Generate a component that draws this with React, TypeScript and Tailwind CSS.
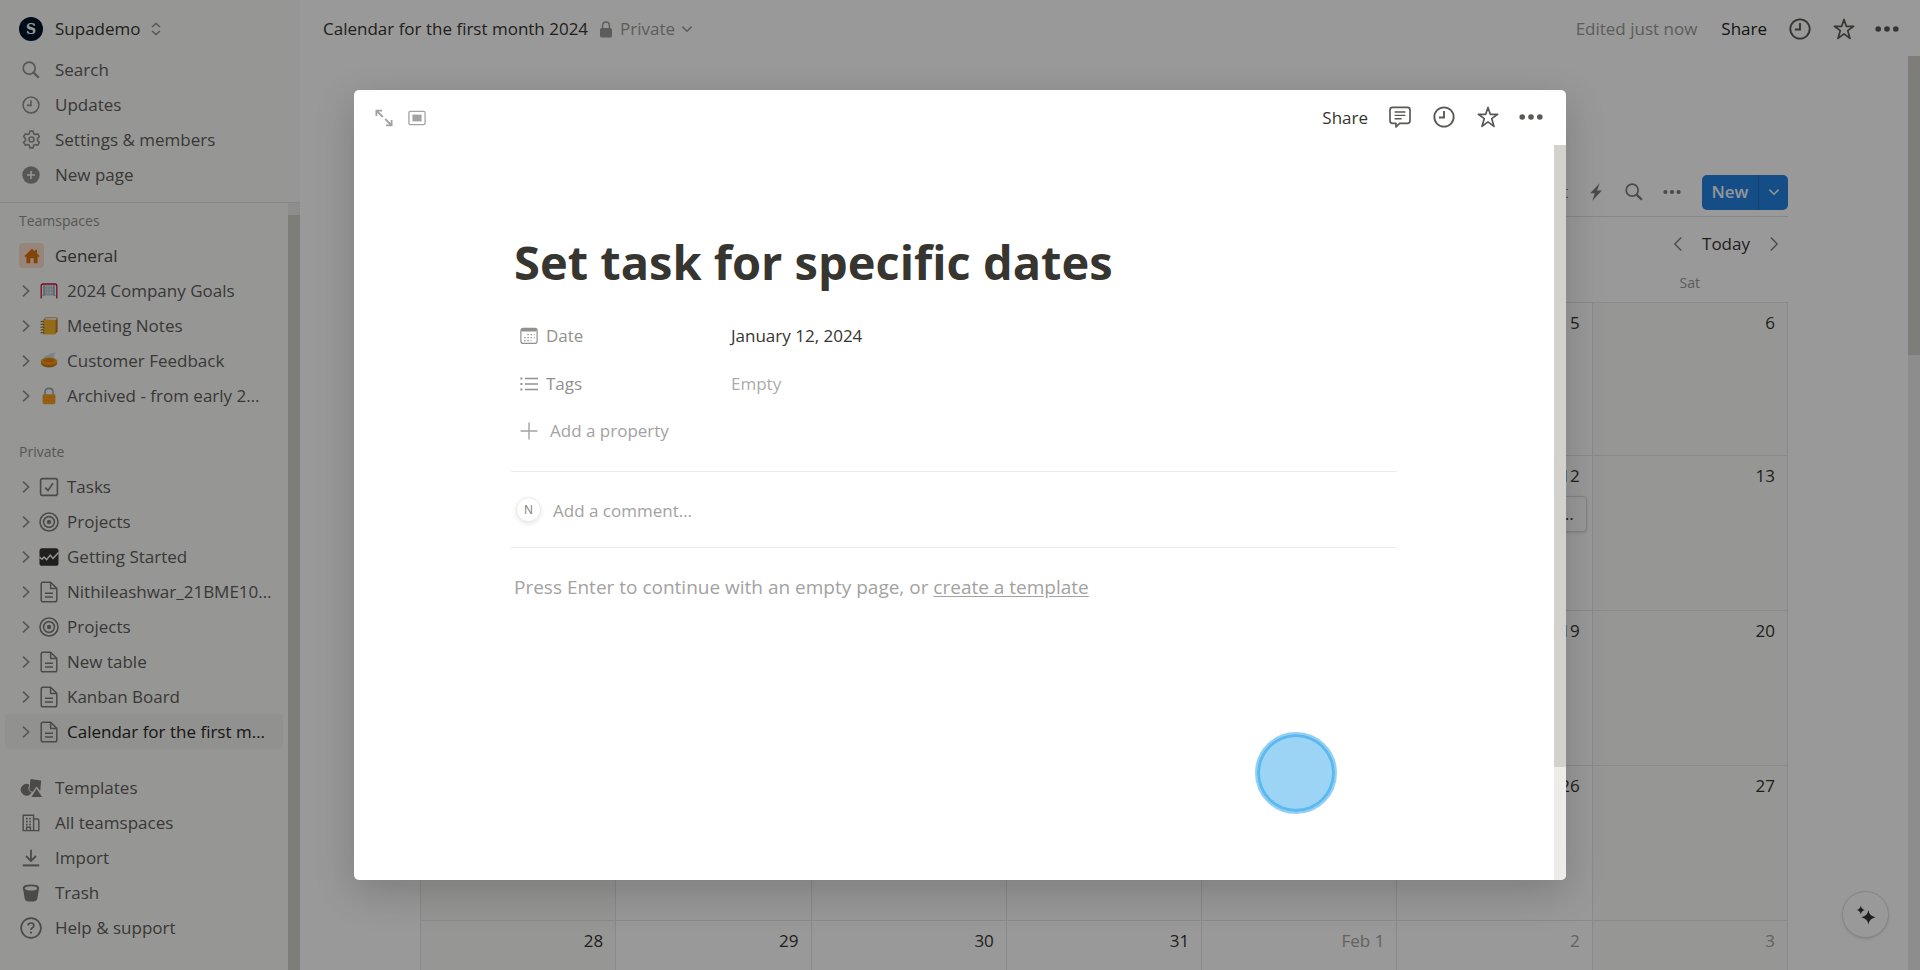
import type { ReactNode } from "react";

type IconProps = { className?: string };

function ChevronRight({ className = "" }: IconProps) {
  return (
    <svg viewBox="0 0 16 16" className={className} fill="none" stroke="currentColor" strokeWidth="1.9" aria-hidden="true">
      <path d="M4.6 1.8 L11 8 L4.6 14.2" />
    </svg>
  );
}

function ThinChevron({ className = "" }: IconProps) {
  return (
    <svg viewBox="0 0 16 16" className={className} fill="none" stroke="currentColor" strokeWidth="1.4" aria-hidden="true">
      <path d="M4.8 1.4 L11.2 8 L4.8 14.6" />
    </svg>
  );
}

function ChevronDown({ className = "" }: IconProps) {
  return (
    <svg viewBox="0 0 12 12" className={className} fill="none" stroke="currentColor" strokeWidth="1.5" aria-hidden="true">
      <path d="M1.4 3.6 L6 8.2 L10.6 3.6" />
    </svg>
  );
}

function UpDown({ className = "" }: IconProps) {
  return (
    <svg viewBox="0 0 10 14" className={className} fill="none" stroke="currentColor" strokeWidth="1.5" aria-hidden="true">
      <path d="M1 5 L5 1.4 L9 5 M1 9 L5 12.6 L9 9" />
    </svg>
  );
}

function SearchIcon({ className = "" }: IconProps) {
  return (
    <svg viewBox="0 0 18 18" className={className} fill="none" stroke="currentColor" aria-hidden="true">
      <circle cx="7.2" cy="7.2" r="6" strokeWidth="1.7" />
      <path d="M11.6 11.6 L16.8 16.8" strokeWidth="2.3" />
    </svg>
  );
}

function ClockIcon({ className = "" }: IconProps) {
  return (
    <svg viewBox="0 0 20 20" className={className} fill="none" stroke="currentColor" strokeWidth="1.7" aria-hidden="true">
      <circle cx="10" cy="10" r="8.8" />
      <path d="M10 4.6 V10.4 H5.4" />
    </svg>
  );
}

function GearIcon({ className = "" }: IconProps) {
  return (
    <svg viewBox="0 0 20 20" className={className} fill="none" stroke="currentColor" strokeWidth="1.7" strokeLinejoin="round" aria-hidden="true">
      <path d="M8.3 1.2 H11.7 L12.3 3.9 L13.9 4.8 L16.5 4 L18.3 6.9 L16.3 8.9 V11.1 L18.3 13.1 L16.5 16 L13.9 15.2 L12.3 16.1 L11.7 18.8 H8.3 L7.7 16.1 L6.1 15.2 L3.5 16 L1.7 13.1 L3.7 11.1 V8.9 L1.7 6.9 L3.5 4 L6.1 4.8 L7.7 3.9 Z" />
      <circle cx="10" cy="10" r="2.6" />
    </svg>
  );
}

function PlusCircle({ className = "" }: IconProps) {
  return (
    <svg viewBox="0 0 18 18" className={className} aria-hidden="true">
      <circle cx="9" cy="9" r="8.7" fill="currentColor" />
      <path d="M9 5 V13 M5 9 H13" stroke="#f9f9f7" strokeWidth="1.6" />
    </svg>
  );
}

function HouseIcon({ className = "" }: IconProps) {
  return (
    <svg viewBox="0 0 16 16" className={className} fill="currentColor" aria-hidden="true">
      <path d="M8 .8 L10.9 3.5 V1.8 H13 V5.5 L15.6 8 L14.8 9 L13.6 8.4 V15.2 H9.7 V10.3 H6.3 V15.2 H2.4 V8.4 L1.2 9 L.4 8 Z" />
    </svg>
  );
}

function GoalIcon({ className = "" }: IconProps) {
  return (
    <svg viewBox="0 0 18 18" className={className} fill="none" aria-hidden="true">
      <path d="M4 3 H14 V14 H4 Z" fill="#dbe5ec" />
      <path d="M2 14 L4 12.5 V3 M16 14 L14 12.5 V3 M4 12.5 H14 M6.5 3 V12.5 M9 3 V12.5 M11.5 3 V12.5 M4 6 H14 M4 9 H14" stroke="#9fb2bf" strokeWidth=".6" />
      <path d="M4 3 V14 M14 3 V14" stroke="#758a98" strokeWidth=".9" />
      <path d="M1.2 16.5 V4 Q1.2 2 3 2 H15 Q16.8 2 16.8 4 V16.5" stroke="#c8103c" strokeWidth="1.3" />
    </svg>
  );
}

function NotebookIcon({ className = "" }: IconProps) {
  return (
    <svg viewBox="0 0 18 18" className={className} fill="none" aria-hidden="true">
      <path d="M3.4 2.6 L5.6 .5 H16.4 Q17.6 .5 17.6 1.8 V14.4 L15.4 17 Z" fill="#b97a2a" />
      <path d="M4.2 2.6 L6 1.1 H16.2 L17 2 L15.4 3.6 Z" fill="#f5e6cf" />
      <rect x="2.8" y="3" width="12.8" height="14.4" rx="1.2" fill="#f5b52c" />
      <path d="M.6 4.8 Q2.4 3.6 4.2 5 M.6 7.6 Q2.4 6.4 4.2 7.8 M.6 10.4 Q2.4 9.2 4.2 10.6 M.6 13.2 Q2.4 12 4.2 13.4 M.6 16 Q2.4 14.8 4.2 16.2" stroke="#59482c" strokeWidth="1" />
    </svg>
  );
}

function PieIcon({ className = "" }: IconProps) {
  return (
    <svg viewBox="0 0 18 18" className={className} fill="none" aria-hidden="true">
      <path d="M4 6 Q5 3 8.5 3 Q9.5 1 16 .8 Q13 3 14.5 6 Z" fill="#cfdde8" />
      <path d="M1 9.5 V12 Q3 15.4 9 15.4 Q15 15.4 17 12 V9.5 Z" fill="#c77a12" />
      <ellipse cx="9" cy="9.2" rx="8.2" ry="3.8" fill="#f79a1d" />
      <ellipse cx="9" cy="8.3" rx="5.6" ry="2" fill="#e08410" />
    </svg>
  );
}

function LockEmoji({ className = "" }: IconProps) {
  return (
    <svg viewBox="0 0 18 18" className={className} fill="none" aria-hidden="true">
      <path d="M5 8 V5 Q5 1.4 9 1.4 Q13 1.4 13 5 V8" stroke="#8fa7b8" strokeWidth="1.6" />
      <rect x="2.6" y="7.2" width="12.8" height="10" rx="1.4" fill="#f7a223" />
      <path d="M3 10.4 H15 M3 13.6 H15" stroke="#ea9416" strokeWidth=".8" />
    </svg>
  );
}

function TaskIcon({ className = "" }: IconProps) {
  return (
    <svg viewBox="0 0 20 20" className={className} fill="none" stroke="currentColor" strokeWidth="1.6" aria-hidden="true">
      <rect x="1.6" y="1.6" width="16.8" height="16.8" rx="2" />
      <path d="M6.2 10.6 L9 13.4 L14 6.2" />
    </svg>
  );
}

function TargetIcon({ className = "" }: IconProps) {
  return (
    <svg viewBox="0 0 20 20" className={className} fill="none" stroke="currentColor" strokeWidth="1.6" aria-hidden="true">
      <circle cx="10" cy="10" r="9" />
      <circle cx="10" cy="10" r="5.4" />
      <circle cx="10" cy="10" r="2.2" fill="currentColor" stroke="none" />
    </svg>
  );
}

function ActivityIcon({ className = "" }: IconProps) {
  return (
    <svg viewBox="0 0 20 20" className={className} fill="none" aria-hidden="true">
      <rect x=".5" y="1.2" width="19" height="17.6" rx="2.6" fill="#37352f" />
      <path d="M.5 10 L3 12.2 L5 10 L7.6 12.6 L11.2 8 L14 11.4 L19.5 5.4" stroke="#f9f9f7" strokeWidth="1.4" />
    </svg>
  );
}

function PageIcon({ className = "" }: IconProps) {
  return (
    <svg viewBox="0 0 18 22" className={className} fill="none" stroke="currentColor" strokeWidth="1.5" strokeLinejoin="round" aria-hidden="true">
      <path d="M3 1.2 H10.6 L16.8 7.4 V19 Q16.8 20.8 15 20.8 H3 Q1.2 20.8 1.2 19 V3 Q1.2 1.2 3 1.2 Z" />
      <path d="M10.6 1.4 V7.4 H16.6 M5 12.2 H13 M5 16 H13" />
    </svg>
  );
}

function TemplatesIcon({ className = "" }: IconProps) {
  return (
    <svg viewBox="0 0 22 20" className={className} fill="currentColor" aria-hidden="true">
      <path d="M10.5 1 L21.2 2.6 L20.2 13 L16.6 8.6 L12.8 13.8 Q11 13.4 9.4 12 Z" />
      <path d="M9.2 6.6 A5.8 5.8 0 1 0 10.6 16 L11.6 14.4 Q8 13 8.4 10.6 Z" />
      <path d="M16.6 10.4 L22 19 H11.4 Z" />
    </svg>
  );
}

function BuildingIcon({ className = "" }: IconProps) {
  return (
    <svg viewBox="0 0 18 18" className={className} fill="none" stroke="currentColor" strokeWidth="1.4" aria-hidden="true">
      <path d="M1.2 1.2 H11.6 V16.6 H1.2 Z M11.6 5 H15.6 Q16.8 5 16.8 6.2 V16.6 H11.6" />
      <path d="M4 4.6 H9 M4 7.6 H9 M4 10.6 H9 " strokeWidth="1.6" strokeDasharray="1.6 1.6" />
      <path d="M4.6 16.4 V13.2 H8.4 V16.4" />
    </svg>
  );
}

function ImportIcon({ className = "" }: IconProps) {
  return (
    <svg viewBox="0 0 18 18" className={className} fill="none" stroke="currentColor" strokeWidth="1.8" aria-hidden="true">
      <path d="M9 .8 V11.4 M4 7 L9 12 L14 7" />
      <path d="M.8 16.4 H17.2" strokeWidth="2" />
    </svg>
  );
}

function TrashIcon({ className = "" }: IconProps) {
  return (
    <svg viewBox="0 0 18 18" className={className} aria-hidden="true">
      <path d="M.8 3.8 Q.8 .4 9 .4 Q17.2 .4 17.2 3.8 L15.2 15 Q14.6 17.6 9 17.6 Q3.4 17.6 2.8 15 Z" fill="currentColor" />
      <ellipse cx="9" cy="4.4" rx="6.2" ry="2.2" fill="#f9f9f7" />
    </svg>
  );
}

function HelpIcon({ className = "" }: IconProps) {
  return (
    <svg viewBox="0 0 22 22" className={className} fill="none" stroke="currentColor" strokeWidth="1.7" aria-hidden="true">
      <circle cx="11" cy="11" r="9.9" />
      <path d="M8.1 8.6 Q8.1 6 11 6 Q13.9 6 13.9 8.5 Q13.9 9.9 12.4 10.8 Q11 11.7 11 13" />
      <circle cx="11" cy="15.6" r="1.1" fill="currentColor" stroke="none" />
    </svg>
  );
}

function PadlockIcon({ className = "" }: IconProps) {
  return (
    <svg viewBox="0 0 12 17" className={className} aria-hidden="true">
      <path d="M2.6 8 V4.6 Q2.6 1 6 1 Q9.4 1 9.4 4.6 V8" fill="none" stroke="currentColor" strokeWidth="1.4" />
      <rect x="0" y="7" width="12" height="9.6" rx="1.6" fill="currentColor" />
    </svg>
  );
}

function StarIcon({ className = "" }: IconProps) {
  return (
    <svg viewBox="0 0 22 22" className={className} fill="none" stroke="currentColor" strokeWidth="1.7" strokeLinejoin="round" aria-hidden="true">
      <path d="M11 1.4 L13.3 8.3 H20.6 L14.7 12.6 L17 20.4 L11 15.8 L5 20.4 L7.3 12.6 L1.4 8.3 H8.7 Z" />
    </svg>
  );
}

function DotsIcon({ className = "" }: IconProps) {
  return (
    <svg viewBox="0 0 24 8" className={className} fill="currentColor" aria-hidden="true">
      <circle cx="3.2" cy="4" r="2.8" />
      <circle cx="12" cy="4" r="2.8" />
      <circle cx="20.8" cy="4" r="2.8" />
    </svg>
  );
}

function CommentIcon({ className = "" }: IconProps) {
  return (
    <svg viewBox="0 0 22 22" className={className} fill="none" stroke="currentColor" strokeWidth="1.7" strokeLinejoin="round" aria-hidden="true">
      <path d="M3.6 1.4 H18.4 Q21 1.4 21 4 V14.8 Q21 17.4 18.4 17.4 H10.6 L7 21 V17.4 H3.6 Q1 17.4 1 14.8 V4 Q1 1.4 3.6 1.4 Z" />
      <path d="M5.6 6 H16.4 M5.6 9.4 H16.4 M5.6 12.8 H12.6" strokeWidth="1.4" />
    </svg>
  );
}

function ExpandIcon({ className = "" }: IconProps) {
  return (
    <svg viewBox="0 0 18 18" className={className} fill="none" stroke="currentColor" strokeWidth="1.8" aria-hidden="true">
      <path d="M1.4 7 V1.6 H7 M1.8 2 L7.8 8 M16.6 11 V16.4 H11 M16.2 16 L10.2 10" />
    </svg>
  );
}

function PeekIcon({ className = "" }: IconProps) {
  return (
    <svg viewBox="0 0 18 16" className={className} aria-hidden="true">
      <rect x=".9" y="1.4" width="16.2" height="13.2" rx="1.4" fill="none" stroke="currentColor" strokeWidth="1.3" />
      <rect x="4.4" y="4.6" width="9.2" height="6.8" fill="currentColor" />
    </svg>
  );
}

function DateIcon({ className = "" }: IconProps) {
  return (
    <svg viewBox="0 0 18 18" className={className} fill="none" stroke="currentColor" aria-hidden="true">
      <rect x=".9" y="1.4" width="16.2" height="15" rx="2.2" strokeWidth="1.2" />
      <path d="M1.4 3 H16.6" strokeWidth="3" />
      <path d="M7.4 7.6 H14.6 M4.2 10.6 H14.6 M4.2 13.6 H11.4" strokeWidth="1.3" strokeDasharray="1.4 1.8" />
    </svg>
  );
}

function ListIcon({ className = "" }: IconProps) {
  return (
    <svg viewBox="0 0 18 18" className={className} fill="none" stroke="currentColor" strokeWidth="1.5" aria-hidden="true">
      <path d="M5 3.4 H18 M5 9 H18 M5 14.6 H18" />
      <path d="M.4 3.4 H2.4 M.4 9 H2.4 M.4 14.6 H2.4" strokeWidth="2" />
    </svg>
  );
}

function PlusIcon({ className = "" }: IconProps) {
  return (
    <svg viewBox="0 0 18 18" className={className} fill="none" stroke="currentColor" strokeWidth="1.4" aria-hidden="true">
      <path d="M9 .6 V17.4 M.6 9 H17.4" />
    </svg>
  );
}

function BoltIcon({ className = "" }: IconProps) {
  return (
    <svg viewBox="0 0 12 18" className={className} fill="currentColor" aria-hidden="true">
      <path d="M9.6 .2 L.2 10.2 H4.8 L2.4 17.8 L11.9 7.4 H7.1 Z" />
    </svg>
  );
}

function SparkleIcon({ className = "" }: IconProps) {
  return (
    <svg viewBox="0 0 20 20" className={className} fill="currentColor" aria-hidden="true">
      <path d="M12.4 5 Q13.2 11 19.6 12.2 Q13.2 13.4 12.4 19.6 Q11.6 13.4 5.2 12.2 Q11.6 11 12.4 5 Z" />
      <path d="M4.8 .8 Q5.4 4.2 9 5 Q5.4 5.8 4.8 9.4 Q4.2 5.8 .6 5 Q4.2 4.2 4.8 .8 Z" />
    </svg>
  );
}

function SideRow({ icon, label }: { icon: ReactNode; label: string }) {
  return (
    <button type="button" className="flex h-[35px] w-full items-center gap-3 pl-[19px] text-left text-[#5f5e5b]">
      <span className="flex w-6 shrink-0 justify-center">{icon}</span>
      <span className="font-medium">{label}</span>
    </button>
  );
}

function PageRow({ icon, label, active = false }: { icon: ReactNode; label: string; active?: boolean }) {
  return (
    <div className="px-[5px]">
      <button
        type="button"
        className={
          active
            ? "flex h-[35px] w-full items-center rounded-[4px] bg-[#f2f2ef] pl-[14px] text-left whitespace-nowrap text-[#282724]"
            : "flex h-[35px] w-full items-center rounded-[4px] pl-[14px] text-left whitespace-nowrap text-[#5f5e5b]"
        }
      >
        <ChevronRight className="size-3.5 shrink-0 text-[#91918e]" />
        <span className="ml-1 flex w-6 shrink-0 justify-center text-[#7d7c78]">{icon}</span>
        <span className="ml-1.5 font-medium">{label}</span>
      </button>
    </div>
  );
}

function Sidebar() {
  return (
    <aside className="flex w-[300px] shrink-0 flex-col overflow-hidden bg-[#fbfbf8]">
      <button type="button" className="mb-1 flex h-12 shrink-0 items-center pt-[9px] pl-[19px] text-[#37352f]">
        <span className="flex size-6 items-center justify-center rounded-full bg-[#001428] font-['DejaVu_Serif',serif] text-sm leading-none font-bold text-white">
          S
        </span>
        <span className="ml-3 font-medium">Supademo</span>
        <UpDown className="ml-2.5 h-[14px] w-2.5 text-[#91918e]" />
      </button>
      <nav aria-label="Workspace" className="shrink-0 border-b border-[#e2e2df] pb-2.5">
        <SideRow icon={<SearchIcon className="size-[18px] text-[#91918e]" />} label="Search" />
        <SideRow icon={<ClockIcon className="size-[18px] text-[#91918e]" />} label="Updates" />
        <SideRow icon={<GearIcon className="size-[19px] text-[#91918e]" />} label="Settings & members" />
        <SideRow icon={<PlusCircle className="size-[18px] text-[#91918e]" />} label="New page" />
      </nav>
      <div className="flex min-h-0 flex-1">
        <div className="min-w-0 flex-1 overflow-hidden">
          <h2 className="flex h-[35px] items-center pl-[19px] text-sm font-medium text-[#91918e]">Teamspaces</h2>
          <button type="button" className="flex h-[35px] w-full items-center gap-[11px] pl-[19px] text-left text-[#4b4a46]">
            <span className="flex size-[25px] shrink-0 items-center justify-center rounded-[4px] bg-[#fadec9] text-[#d9730d]">
              <HouseIcon className="size-4" />
            </span>
            <span className="font-medium">General</span>
          </button>
          <PageRow icon={<GoalIcon className="size-[18px]" />} label="2024 Company Goals" />
          <PageRow icon={<NotebookIcon className="size-[18px]" />} label="Meeting Notes" />
          <PageRow icon={<PieIcon className="size-[18px]" />} label="Customer Feedback" />
          <PageRow icon={<LockEmoji className="size-[18px]" />} label="Archived - from early 2…" />
          <h2 className="mt-[21px] flex h-[35px] items-center pl-[19px] text-sm font-medium text-[#91918e]">Private</h2>
          <PageRow icon={<TaskIcon className="size-5" />} label="Tasks" />
          <PageRow icon={<TargetIcon className="size-5" />} label="Projects" />
          <PageRow icon={<ActivityIcon className="size-5" />} label="Getting Started" />
          <PageRow icon={<PageIcon className="h-[22px] w-[18px]" />} label="Nithileashwar_21BME10…" />
          <PageRow icon={<TargetIcon className="size-5" />} label="Projects" />
          <PageRow icon={<PageIcon className="h-[22px] w-[18px]" />} label="New table" />
          <PageRow icon={<PageIcon className="h-[22px] w-[18px]" />} label="Kanban Board" />
          <PageRow active icon={<PageIcon className="h-[22px] w-[18px]" />} label="Calendar for the first m…" />
          <div className="mt-[21px]">
            <SideRow icon={<TemplatesIcon className="h-5 w-[22px] text-[#7d7c78]" />} label="Templates" />
            <SideRow icon={<BuildingIcon className="size-[18px] text-[#7d7c78]" />} label="All teamspaces" />
            <SideRow icon={<ImportIcon className="size-[18px] text-[#7d7c78]" />} label="Import" />
            <SideRow icon={<TrashIcon className="size-[18px] text-[#7d7c78]" />} label="Trash" />
            <SideRow icon={<HelpIcon className="size-[22px] text-[#7d7c78]" />} label="Help & support" />
          </div>
        </div>
        <div className="w-3 bg-[#edece9] pt-3">
          <div className="h-full bg-[#d3d1cb]" />
        </div>
      </div>
    </aside>
  );
}

const weekdays = [
  { name: "Sunday", label: "" },
  { name: "Monday", label: "" },
  { name: "Tuesday", label: "" },
  { name: "Wednesday", label: "" },
  { name: "Thursday", label: "" },
  { name: "Friday", label: "" },
  { name: "Saturday", label: "Sat" },
];

const weeks: string[][] = [
  ["", "", "", "", "", "5", "6"],
  ["", "", "", "", "", "12", "13"],
  ["", "", "", "", "", "19", "20"],
  ["", "", "", "", "", "26", "27"],
  ["28", "29", "30", "31", "Feb 1", "2", "3"],
];

function Calendar() {
  return (
    <table className="w-full table-fixed border-collapse">
      <thead>
        <tr>
          {weekdays.map((day) => (
            <th key={day.name} aria-label={day.name} className="h-[37px] p-0 text-center text-sm font-normal text-[#9b9a97]">
              {day.label}
            </th>
          ))}
        </tr>
      </thead>
      <tbody>
        {weeks.map((week, row) => (
          <tr key={row} className="h-[155px] first:h-[153px]">
            {week.map((day, col) => {
              const outside = row === 4 && col > 3;
              const weekend = col === 0 || col === 6;
              return (
                <td
                  key={col}
                  className={
                    weekend
                      ? "border border-[#e6e6e3] bg-[#fbfbf8] p-0 align-top"
                      : "border border-[#e6e6e3] p-0 align-top"
                  }
                >
                  <div className={outside ? "pt-2 pr-3 text-right text-[#a5a4a1]" : "pt-2 pr-3 text-right text-[#37352f]"}>
                    {day}
                  </div>
                  {day === "12" && (
                    <div className="mt-2 px-[5px]">
                      <button
                        type="button"
                        aria-label="Set task for specific dates"
                        className="flex h-9 w-full items-center justify-end rounded-[4px] border border-[#dcdbd8] bg-white pr-3 font-medium shadow-sm"
                      >
                        …
                      </button>
                    </div>
                  )}
                </td>
              );
            })}
          </tr>
        ))}
      </tbody>
    </table>
  );
}

function Workspace() {
  return (
    <main className="flex min-w-0 flex-1 flex-col">
      <header className="flex h-14 shrink-0 items-center pt-0.5 pr-[21px] pl-[23px]">
        <a href="#page" className="text-[#37352f]">Calendar for the first month 2024</a>
        <button type="button" className="ml-3 flex items-center text-[#9b9a97]">
          <PadlockIcon className="mr-2 h-[17px] w-3" />
          Private
          <ChevronDown className="ml-1.5 size-3" />
        </button>
        <span className="ml-auto text-[#9b9a97]">Edited just now</span>
        <button type="button" className="ml-6 text-[#1f1e1b]">Share</button>
        <div className="ml-[22px] flex items-center gap-[22px] text-[#5a5955]">
          <button type="button" aria-label="Page history"><ClockIcon className="size-[22px]" /></button>
          <button type="button" aria-label="Favorite"><StarIcon className="size-[22px]" /></button>
          <button type="button" aria-label="More options" className="-ml-0.5"><DotsIcon className="h-2 w-6" /></button>
        </div>
      </header>
      <div className="flex min-h-0 flex-1">
        <div className="min-w-0 flex-1 overflow-hidden px-[120px] pt-[110px]">
          <div className="flex h-[51px] items-center justify-end border-b border-[#e2e2df] pt-0.5 text-[#7d7c78]">
            <button type="button">Sort</button>
            <button type="button" aria-label="Automations" className="ml-[22px]"><BoltIcon className="h-[18px] w-3" /></button>
            <button type="button" aria-label="Search" className="ml-[23px]"><SearchIcon className="size-[18px]" /></button>
            <button type="button" aria-label="View options" className="ml-5"><DotsIcon className="h-1.5 w-[18px]" /></button>
            <div className="ml-[21px] flex h-[35px] overflow-hidden rounded-[5px] bg-[#2383e2] text-[#f4f8fd]">
              <button type="button" className="w-[57px] border-r border-[#1b6fc4] font-semibold">New</button>
              <button type="button" aria-label="New options" className="flex w-[29px] items-center justify-center">
                <ChevronDown className="size-3" />
              </button>
            </div>
          </div>
          <div className="flex h-12 items-center justify-end pt-1.5 text-[#37352f]">
            <button type="button" aria-label="Previous month" className="text-[#7d7c78]">
              <ThinChevron className="size-4 rotate-180" />
            </button>
            <button type="button" className="mx-4">Today</button>
            <button type="button" aria-label="Next month" className="mr-1.5 text-[#7d7c78]">
              <ThinChevron className="size-4" />
            </button>
          </div>
          <Calendar />
        </div>
        <div className="w-3 shrink-0 bg-[#edece9]">
          <div className="h-[299px] bg-[#d3d1cb]" />
        </div>
      </div>
    </main>
  );
}

function TaskDialog() {
  return (
    <section
      role="dialog"
      aria-label="Set task for specific dates"
      className="relative flex h-[calc(100%-180px)] w-full max-w-[1212px] flex-col overflow-hidden rounded-[5px] bg-white text-[#37352f] shadow-[0_12px_40px_rgba(15,15,15,0.2)]"
    >
      <header className="flex h-[55px] shrink-0 items-center pr-[23px] pl-[21px]">
        <div className="flex items-center gap-[15px] text-[#a3a29f]">
          <button type="button" aria-label="Open as full page"><ExpandIcon className="size-[18px]" /></button>
          <button type="button" aria-label="Switch peek mode"><PeekIcon className="h-4 w-[18px]" /></button>
        </div>
        <button type="button" className="ml-auto">Share</button>
        <div className="ml-[21px] flex items-center gap-[22px] pb-0.5 text-[#5a5955]">
          <button type="button" aria-label="Comments"><CommentIcon className="size-[22px]" /></button>
          <button type="button" aria-label="Page history"><ClockIcon className="size-[22px]" /></button>
          <button type="button" aria-label="Favorite"><StarIcon className="size-[22px]" /></button>
          <button type="button" aria-label="More options" className="-ml-0.5"><DotsIcon className="h-2 w-6" /></button>
        </div>
      </header>
      <div className="flex min-h-0 flex-1">
        <div className="min-w-0 flex-1 overflow-hidden px-[157px] pt-[81px]">
          <h1 className="pl-[3px] text-[47px] leading-[72px] font-bold">Set task for specific dates</h1>
          <dl className="mt-[14px] pl-[9px]">
            <div className="flex h-12 items-center">
              <dt className="flex w-[211px] items-center gap-2 text-[#91908d]">
                <DateIcon className="size-[18px]" />
                Date
              </dt>
              <dd>January 12, 2024</dd>
            </div>
            <div className="flex h-12 items-center">
              <dt className="flex w-[211px] items-center gap-2 text-[#91908d]">
                <ListIcon className="size-[18px]" />
                Tags
              </dt>
              <dd className="text-[#acaba9]">Empty</dd>
            </div>
          </dl>
          <button type="button" className="flex h-[46px] items-center gap-3 pl-[9px] text-[#a3a29f]">
            <PlusIcon className="size-[18px]" />
            Add a property
          </button>
          <div className="mt-[17px] flex h-[77px] items-center gap-3 border-y border-[#ebebea] pl-[5px]">
            <span className="flex size-[25px] shrink-0 items-center justify-center rounded-full border border-[#ebebea] bg-white text-xs text-[#7d7c78] shadow-[0_2px_4px_rgba(15,15,15,0.1)]">
              N
            </span>
            <input
              type="text"
              aria-label="Add a comment"
              placeholder="Add a comment…"
              className="min-w-0 flex-1 bg-transparent pt-0.5 outline-none placeholder:text-[#a3a29f]"
            />
          </div>
          <p className="pt-6 pl-[3px] text-[19px] leading-[30px] text-[#a3a29f]">
            Press Enter to continue with an empty page, or{" "}
            <a href="#template" className="underline underline-offset-2">create a template</a>
          </p>
        </div>
        <div className="w-3 shrink-0 bg-[#edece9]">
          <div className="h-[622px] bg-[#d3d1cb]" />
        </div>
      </div>
      <span
        aria-hidden="true"
        className="absolute right-[229px] bottom-[66px] size-[82px] rounded-full border-2 border-[#94d0f5] bg-[#9bd4f5] shadow-[inset_0_0_0_3px_#5cb9ee]"
      />
    </section>
  );
}

export default function App() {
  return (
    <div className="relative flex h-screen overflow-hidden bg-white font-['Open_Sans','Noto_Sans',sans-serif] text-[17px] leading-6 text-[#37352f]">
      <Sidebar />
      <Workspace />
      <button
        type="button"
        aria-label="Ask AI"
        className="absolute right-[31px] bottom-8 flex size-[47px] items-center justify-center rounded-full border border-[#e0dfdc] bg-white text-[#37352f] shadow"
      >
        <SparkleIcon className="size-5" />
      </button>
      <div className="absolute inset-0 flex items-center justify-center bg-black/40">
        <TaskDialog />
      </div>
    </div>
  );
}
